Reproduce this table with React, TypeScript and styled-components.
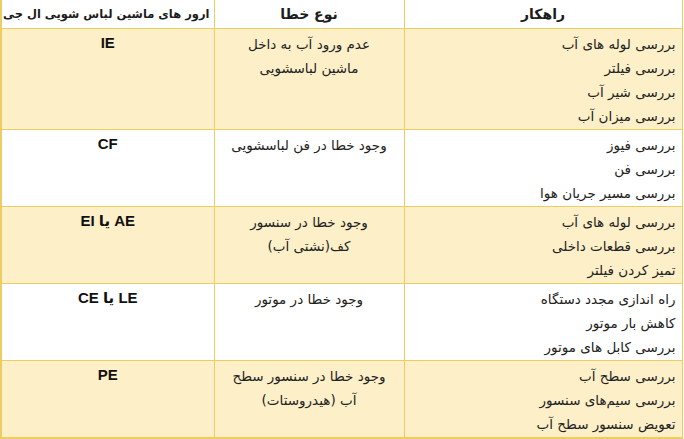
import React from 'react';
import styled, { createGlobalStyle } from 'styled-components';

const GlobalStyle = createGlobalStyle`
    html, body {
        margin: 0;
        padding: 0;
        background: #ffffff;
    }
    body {
        font-family: "DejaVu Sans", "Noto Sans", sans-serif;
        color: #222222;
    }
`;

type ErrorRow = {
    code: string;
    kind: string[];
    fixes: string[];
};

const rows: ErrorRow[] = [
    {
        code: 'IE',
        kind: ['عدم ورود آب به داخل', 'ماشین لباسشویی'],
        fixes: ['بررسی لوله های آب', 'بررسی فیلتر', 'بررسی شیر آب', 'بررسی میزان آب'],
    },
    {
        code: 'CF',
        kind: ['وجود خطا در فن لباسشویی'],
        fixes: ['بررسی فیوز', 'بررسی فن', 'بررسی مسیر جریان هوا'],
    },
    {
        code: 'AE یا EI',
        kind: ['وجود خطا در سنسور', 'کف(نشتی آب)'],
        fixes: ['بررسی لوله های آب', 'بررسی قطعات داخلی', 'تمیز کردن فیلتر'],
    },
    {
        code: 'LE یا CE',
        kind: ['وجود خطا در موتور'],
        fixes: ['راه اندازی مجدد دستگاه', 'کاهش بار موتور', 'بررسی کابل های موتور'],
    },
    {
        code: 'PE',
        kind: ['وجود خطا در سنسور سطح', 'آب (هیدروستات)'],
        fixes: ['بررسی سطح آب', 'بررسی سیم‌های سنسور', 'تعویض سنسور سطح آب'],
    },
];

function App() {
    return (
        <>
            <GlobalStyle />
            <Table dir="rtl">
                <colgroup>
                    <col style={{ width: 278 }} />
                    <col style={{ width: 190 }} />
                    <col style={{ width: 213 }} />
                </colgroup>
                <thead>
                    <tr>
                        <HeadCell>راهکار</HeadCell>
                        <HeadCell>نوع خطا</HeadCell>
                        <HeadCell $small>ارور های ماشین لباس شویی ال جی</HeadCell>
                    </tr>
                </thead>
                <tbody>
                    {rows.map((row, idx) => (
                        <tr key={idx}>
                            <Cell $cream={idx % 2 === 0} $align="right">
                                {row.fixes.map((f, i) => <Line key={i}>{f}</Line>)}
                            </Cell>
                            <Cell $cream={idx % 2 === 0} $align="center">
                                {row.kind.map((k, i) => <Line key={i}>{k}</Line>)}
                            </Cell>
                            <Cell $cream={idx % 2 === 0} $align="center">
                                <Code>{row.code}</Code>
                            </Cell>
                        </tr>
                    ))}
                </tbody>
            </Table>
        </>
    );
}

const Table = styled.table`
    width: 682px;
    border-collapse: collapse;
    table-layout: fixed;
    border-left: 2px solid #eccd5f;
    border-bottom: 2px solid #eccd5f;
`;

const HeadCell = styled.th<{ $small?: boolean }>`
    height: 28px;
    padding: 0 4px;
    box-sizing: border-box;
    background: #ffffff;
    border: 1px solid #eccd5f;
    border-top: none;
    font-family: "DejaVu Sans", sans-serif;
    font-weight: bold;
    font-size: ${(p) => (p.$small ? '11.5px' : '14px')};
    color: #1c1c1c;
    text-align: center;
    vertical-align: middle;
    white-space: nowrap;
`;

const Cell = styled.td<{ $cream: boolean; $align: 'right' | 'center' }>`
    padding: 3px 6px 1px 6px;
    background: ${(p) => (p.$cream ? '#fdf0c9' : '#ffffff')};
    border: 1px solid #eccd5f;
    text-align: ${(p) => p.$align};
    vertical-align: top;
`;

const Line = styled.div`
    font-size: 13.5px;
    line-height: 24px;
    white-space: nowrap;
`;

const Code = styled.div`
    font-family: "Liberation Sans", "DejaVu Sans", sans-serif;
    font-weight: bold;
    font-size: 15px;
    line-height: 22px;
    color: #111111;
`;

export default App;
